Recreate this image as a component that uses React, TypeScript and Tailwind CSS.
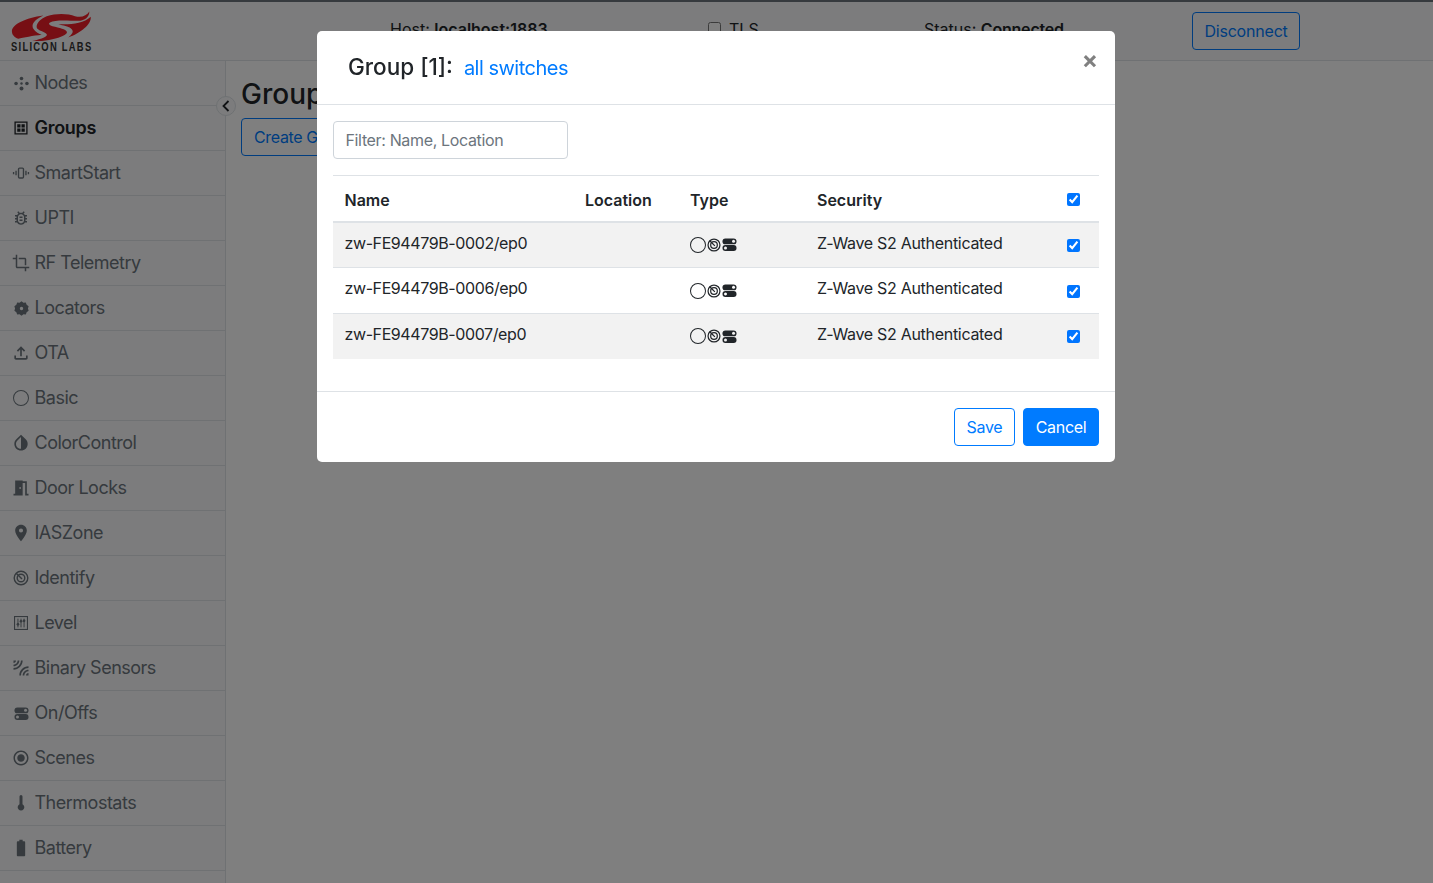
import React from "react";
import { BsCircle } from "react-icons/bs";
import {
  MdOutlineBugReport,
  MdCrop,
  MdOutlineFileUpload,
  MdInvertColors,
  MdMeetingRoom,
  MdPlace,
  MdLeakAdd,
  MdRadioButtonChecked,
  MdBatteryFull,
} from "react-icons/md";

const font = { fontFamily: "Inter, 'Liberation Sans', sans-serif" };

const Icon = ({ children, size = 16 }: { children: React.ReactNode; size?: number }) => (
  <svg width={size} height={size} viewBox="0 0 16 16" fill="currentColor" className="shrink-0">
    {children}
  </svg>
);

const IdentifyIcon = ({ size = 16 }: { size?: number }) => (
  <Icon size={size}>
    <circle cx="8" cy="8" r="6.800" fill="none" stroke="currentColor" strokeWidth="1.400" />
    <circle cx="8" cy="8" r="3.800" fill="none" stroke="currentColor" strokeWidth="1.400" />
    <path d="M3.200 3.200L9 9" stroke="currentColor" strokeWidth="1.400" />
  </Icon>
);

const OnOffIcon = ({ size = 16, dot }: { size?: number; dot: string }) => (
  <Icon size={size}>
    <rect x=".500" y="1.500" width="15" height="6.300" rx="3.100" />
    <circle cx="12.300" cy="4.650" r="1.600" fill={dot} />
    <rect x=".500" y="8.500" width="15" height="6.300" rx="3.100" />
    <circle cx="3.700" cy="11.650" r="1.600" fill={dot} />
  </Icon>
);

const items: { label: string; active?: boolean; icon: React.ReactNode }[] = [
  {
    label: "Nodes",
    icon: (
      <Icon size={15}>
        <circle cx="8" cy="2.700" r="1.900" />
        <circle cx="8" cy="8" r="1.300" />
        <circle cx="8" cy="13.300" r="2.100" />
        <circle cx="2.200" cy="8" r="1.900" />
        <circle cx="13.800" cy="8" r="1.900" />
      </Icon>
    ),
  },
  {
    label: "Groups",
    active: true,
    icon: (
      <Icon size={14}>
        <path fillRule="evenodd" d="M.5.5h15v15H.5zM2 2v12h12V2zM3.700 3.700h3.700v3.700H3.700zM8.600 3.700h3.700v3.700H8.600zM3.700 8.600h3.700v3.700H3.700zM8.600 8.600h3.700v3.700H8.600z" />
      </Icon>
    ),
  },
  {
    label: "SmartStart",
    icon: (
      <Icon size={18}>
        <rect x="5.800" y="3.600" width="4.400" height="8.800" rx=".900" fill="none" stroke="currentColor" strokeWidth="1.200" />
        <path d="M3.600 6v4M1.400 7v2M12.400 6v4M14.600 7v2" stroke="currentColor" strokeWidth="1.200" />
      </Icon>
    ),
  },
  { label: "UPTI", icon: <MdOutlineBugReport size={18} /> },
  { label: "RF Telemetry", icon: <MdCrop size={18} /> },
  {
    label: "Locators",
    icon: (
      <Icon size={15}>
        <path fillRule="evenodd" d="M8 .3l2.100 1.500 2.500-.2.900 2.400 2.100 1.500-.7 2.500.7 2.500-2.100 1.500-.9 2.400-2.500-.2L8 15.700l-2.100-1.500-2.500.2-.9-2.400L.4 10.500 1.100 8 .4 5.500l2.100-1.500.9-2.400 2.500.2zM8 6.200a1.800 1.800 0 100 3.600 1.800 1.800 0 000-3.600z" />
      </Icon>
    ),
  },
  { label: "OTA", icon: <MdOutlineFileUpload size={20} /> },
  { label: "Basic", icon: <BsCircle size={16} /> },
  { label: "ColorControl", icon: <MdInvertColors size={20} /> },
  { label: "Door Locks", icon: <MdMeetingRoom size={20} /> },
  { label: "IASZone", icon: <MdPlace size={20} /> },
  { label: "Identify", icon: <IdentifyIcon size={16} /> },
  {
    label: "Level",
    icon: (
      <Icon size={14}>
        <rect x=".600" y=".600" width="14.800" height="14.800" fill="none" stroke="currentColor" strokeWidth="1.300" />
        <path d="M4.500 3v10M8 3v10M11.500 3v10" stroke="currentColor" strokeWidth="1.100" />
        <circle cx="4.500" cy="9.500" r="1.500" />
        <circle cx="8" cy="6" r="1.500" />
        <circle cx="11.500" cy="5.500" r="1.500" />
      </Icon>
    ),
  },
  { label: "Binary Sensors", icon: <MdLeakAdd size={20} /> },
  { label: "On/Offs", icon: <OnOffIcon size={15} dot="#f8f9fa" /> },
  { label: "Scenes", icon: <MdRadioButtonChecked size={18} /> },
  {
    label: "Thermostats",
    icon: (
      <Icon size={16}>
        <path d="M6.500 1.500a1.500 1.500 0 013 0v7.700a3.300 3.300 0 11-3 0z" />
      </Icon>
    ),
  },
  { label: "Battery", icon: <MdBatteryFull size={20} /> },
];

const rows = [
  { name: "zw-FE94479B-0002/ep0", height: "h-[46px]", textPad: "pb-[4px]", striped: true },
  { name: "zw-FE94479B-0006/ep0", height: "h-[46px]", textPad: "pb-[6px]", striped: false },
  { name: "zw-FE94479B-0007/ep0", height: "h-[45px]", textPad: "pb-[5px]", striped: true },
];

const Check = () => (
  <input type="checkbox" defaultChecked className="block h-[13px] w-[13px] accent-[#0075ff]" />
);

export default function App() {
  return (
    <div style={font} className="relative h-[883px] w-[1433px] overflow-hidden bg-white text-[#212529]">
      <div className="h-[2px] bg-[#6c757d]" />
      {/* header */}
      <header className="flex h-[59px] items-center border-b border-[#dee2e6] bg-[#f8f9fa]">
        <div className="w-[225px] self-start pl-[11px] pt-[7px]">
          <svg width="81" height="32" viewBox="33 15 243 95" className="block">
            <g fill="#ee1f28">
              <path d="M36 84C32 62 75 42 130 34 105 46 92 60 100 74 106 84 118 90 125 92 100 95 70 100 55 104 42 98 37 92 36 84Z" />
              <path d="M140 36C170 26 205 28 225 36 245 42 260 34 268 22 268 38 255 50 235 50 205 50 165 46 150 55 142 60 150 65 165 68 195 75 210 82 195 92 175 106 125 112 80 114 110 108 135 102 140 94 145 86 120 82 112 74 104 62 120 44 140 36Z" />
              <path d="M272 38C276 60 240 88 205 100 215 90 225 82 212 72 205 66 190 64 175 60 205 62 250 60 272 38Z" />
            </g>
          </svg>
          <div
            className="origin-left scale-x-75 text-[12.500px] leading-[12px] font-bold tracking-[1.700px] whitespace-nowrap text-[#333]"
            style={{ fontFamily: "'Liberation Sans', sans-serif" }}
          >
            SILICON LABS
          </div>
        </div>
        <div className="ml-[165px] w-[318px] whitespace-nowrap pb-[5px] text-base">
          Host: <b className="font-semibold">localhost:1883</b>
        </div>
        <label className="flex w-[216px] items-center gap-2 pb-[5px] text-base">
          <input type="checkbox" className="h-[13px] w-[13px]" />
          TLS
        </label>
        <div className="w-[268px] whitespace-nowrap pb-[5px] text-base">
          Status: <b className="font-semibold tracking-[-0.200px]">Connected</b>
        </div>
        <button className="h-[38px] w-[108px] rounded border border-[#007bff] text-base tracking-[-0.200px] text-[#007bff]">
          Disconnect
        </button>
      </header>

      <div className="flex">
        {/* sidebar */}
        <nav className="relative h-[822px] w-[226px] shrink-0 border-r border-[#dee2e6] bg-[#f8f9fa]">
          {items.map((it) => (
            <div
              key={it.label}
              className={`flex h-[45px] items-center border-b border-[#dee2e6] pl-[11px] text-lg ${it.active ? "font-semibold tracking-[-0.300px] text-[#212529]" : "tracking-[-0.500px] text-[#6c757d]"}`}
            >
              <span className="flex w-[23.500px] items-center justify-start">
                <span className="flex w-[20px] justify-center">{it.icon}</span>
              </span>
              {it.label}
            </div>
          ))}
          <div className="absolute top-[35px] -right-[11px] flex h-5 w-5 items-center justify-center rounded-full border border-[#dee2e6] bg-[#f8f9fa]">
            <svg width="14" height="14" viewBox="0 0 14 14" fill="none" stroke="#212529" strokeWidth="1.800">
              <path d="M9.500 2l-5 5 5 5" />
            </svg>
          </div>
        </nav>

        {/* content */}
        <main className="px-[15px] pt-[15px]">
          <h2 className="text-[28px] leading-[36px] font-medium">Groups</h2>
          <button className="mt-[6px] h-[38px] rounded border border-[#007bff] px-3 text-base tracking-[-0.350px] text-[#007bff]">
            Create Group
          </button>
        </main>
      </div>

      {/* backdrop and modal */}
      <div className="fixed inset-0 bg-black/50" />
      <div className="absolute left-[317px] top-[31px] h-[431px] w-[798px] rounded-[5px] bg-white">
        <div className="relative flex h-[74px] items-center border-b border-[#dee2e6] pb-[2px] pl-[31px]">
          <span className="text-[22.500px] font-medium leading-[33px]">Group [1]:</span>
          <span className="ml-[11px] mt-[2px] text-[20px] tracking-[-0.500px] text-[#007bff]">all switches</span>
          <span className="absolute right-[17px] top-[15px] text-[24px] font-bold leading-[28px] text-[#808080]">×</span>
        </div>
        <div className="px-[16px] pt-[16px]">
          <input
            readOnly
            placeholder="Filter: Name, Location"
            className="block h-[38px] w-[235px] rounded border border-[#ced4da] px-[11.500px] text-base tracking-[-0.350px] placeholder:text-[#6c757d]"
          />
          <table className="mt-[16px] w-[766px] table-fixed border-collapse text-base">
            <colgroup>
              <col className="w-[240px]" />
              <col className="w-[105px]" />
              <col className="w-[127px]" />
              <col className="w-[234px]" />
              <col className="w-[60px]" />
            </colgroup>
            <thead>
              <tr className="h-[46px] border-t border-b-2 border-[#dee2e6] text-left">
                <th className="pl-[11.500px] pt-[3px] font-semibold">Name</th>
                <th className="pl-3 pt-[3px] font-semibold">Location</th>
                <th className="pl-3 pt-[3px] font-semibold">Type</th>
                <th className="pl-3 pt-[3px] font-semibold">Security</th>
                <th className="pl-[28px] pt-[3px]"><Check /></th>
              </tr>
            </thead>
            <tbody>
              {rows.map((r) => (
                <tr key={r.name} className={`${r.height} border-b border-[#dee2e6] last:border-b-0 ${r.striped ? "bg-[#f2f2f2]" : ""}`}>
                  <td className={`${r.textPad} pl-[11.500px] tracking-[-0.400px]`}>{r.name}</td>
                  <td />
                  <td className="pl-3">
                    <div className="flex items-center text-[#212529]">
                      <BsCircle size={16} />
                      <span className="ml-[1px]"><IdentifyIcon size={14} /></span>
                      <span className="ml-[1px]"><OnOffIcon size={15} dot={r.striped ? "#f2f2f2" : "#ffffff"} /></span>
                    </div>
                  </td>
                  <td className={`${r.textPad} pl-3 tracking-[-0.300px]`}>Z-Wave S2 Authenticated</td>
                  <td className="pl-[28px] pt-[1px]"><Check /></td>
                </tr>
              ))}
            </tbody>
          </table>
        </div>
        <div className="absolute inset-x-0 bottom-0 flex h-[71px] items-center justify-end gap-2 border-t border-[#dee2e6] pr-[16px]">
          <button className="h-[38px] w-[61px] rounded border border-[#007bff] bg-white text-base tracking-[-0.300px] text-[#007bff]">Save</button>
          <button className="h-[38px] w-[76px] rounded border border-[#007bff] bg-[#007bff] text-base tracking-[-0.300px] text-white">Cancel</button>
        </div>
      </div>
    </div>
  );
}
